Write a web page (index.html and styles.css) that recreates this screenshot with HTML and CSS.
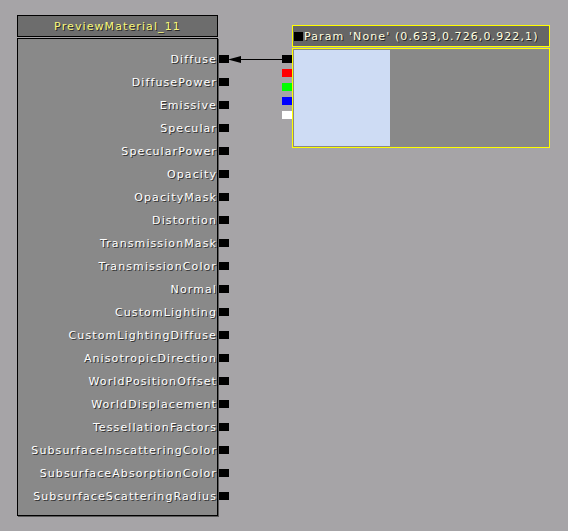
FILE: index.html
```html
<!DOCTYPE html>
<html>
<head>
<meta charset="utf-8">
<link rel="stylesheet" href="styles.css">
</head>
<body>
<div class="canvas">
  <div class="node material">
    <div class="mat-title">PreviewMaterial_11</div>
    <div class="mat-body">
      <div class="row"><span>Diffuse</span><i class="out"></i></div>
      <div class="row"><span>DiffusePower</span><i class="out"></i></div>
      <div class="row"><span>Emissive</span><i class="out"></i></div>
      <div class="row"><span>Specular</span><i class="out"></i></div>
      <div class="row"><span>SpecularPower</span><i class="out"></i></div>
      <div class="row"><span>Opacity</span><i class="out"></i></div>
      <div class="row"><span>OpacityMask</span><i class="out"></i></div>
      <div class="row"><span>Distortion</span><i class="out"></i></div>
      <div class="row"><span>TransmissionMask</span><i class="out"></i></div>
      <div class="row"><span>TransmissionColor</span><i class="out"></i></div>
      <div class="row"><span>Normal</span><i class="out"></i></div>
      <div class="row"><span>CustomLighting</span><i class="out"></i></div>
      <div class="row"><span>CustomLightingDiffuse</span><i class="out"></i></div>
      <div class="row"><span>AnisotropicDirection</span><i class="out"></i></div>
      <div class="row"><span>WorldPositionOffset</span><i class="out"></i></div>
      <div class="row"><span>WorldDisplacement</span><i class="out"></i></div>
      <div class="row"><span>TessellationFactors</span><i class="out"></i></div>
      <div class="row"><span>SubsurfaceInscatteringColor</span><i class="out"></i></div>
      <div class="row"><span>SubsurfaceAbsorptionColor</span><i class="out"></i></div>
      <div class="row"><span>SubsurfaceScatteringRadius</span><i class="out"></i></div>
    </div>
  </div>

  <svg class="wire" width="56" height="12" viewBox="0 0 56 12">
    <line x1="6" y1="4.5" x2="56" y2="4.5" stroke="#000" stroke-width="1"/>
    <polygon points="1,4.5 14,1 14,8" fill="#000"/>
  </svg>

  <div class="node param">
    <div class="param-title"><i class="title-pin"></i>Param 'None' (0.633,0.726,0.922,1)</div>
    <div class="param-main">
      <div class="pins">
        <i class="pin black"></i>
        <i class="pin red"></i>
        <i class="pin green"></i>
        <i class="pin blue"></i>
        <i class="pin white"></i>
      </div>
      <div class="param-body">
        <div class="swatch"></div>
      </div>
    </div>
  </div>
</div>
</body>
</html>
```

FILE: styles.css
```css
html, body {
  margin: 0;
  padding: 0;
  background: #a6a4a7;
}

.canvas {
  position: relative;
  width: 568px;
  height: 531px;
  overflow: hidden;
  font-family: "DejaVu Sans", Verdana, sans-serif;
  font-size: 11px;
  letter-spacing: 1.1px;
}

.node {
  position: absolute;
}

.material {
  left: 17px;
  top: 15px;
  width: 201px;
  display: flex;
  flex-direction: column;
  gap: 1px;
}

.mat-title {
  height: 20px;
  line-height: 21px;
  border: 1px solid #000;
  background: #6d6d6d;
  color: #f8f87c;
  text-align: center;
  text-shadow: 1px 1px 0 #2a2a2a;
  letter-spacing: 1.1px;
}

.mat-body {
  border: 1px solid #000;
  background: #898989;
  padding: 8px 0 8px 0;
  box-shadow: 1px 1px 0 #5a5a5a;
}

.row {
  height: 23px;
  display: flex;
  align-items: center;
  justify-content: flex-end;
  gap: 2px;
  color: #fff;
  text-shadow: 1px 1px 0 #333;
}

.row span {
  line-height: 13px;
  padding-top: 1px;
}

.out {
  display: block;
  width: 10px;
  height: 8px;
  background: #000;
  margin-right: -12px;
}

.wire {
  position: absolute;
  left: 227px;
  top: 55px;
}

.param {
  left: 282px;
  top: 25px;
  display: flex;
  flex-direction: column;
  gap: 1px;
}

.param-title {
  margin-left: 10px;
  width: 256px;
  height: 20px;
  border: 1px solid #ffff00;
  background: #666666;
  color: #ffffe0;
  display: flex;
  align-items: center;
  text-shadow: 1px 1px 0 #222;
  white-space: nowrap;
}

.title-pin {
  display: block;
  width: 9px;
  height: 9px;
  background: #000;
  margin: 0 1px 0 1px;
}

.param-main {
  display: flex;
}

.pins {
  width: 10px;
  display: flex;
  flex-direction: column;
  gap: 6px;
  padding-top: 7px;
}

.pin {
  display: block;
  width: 10px;
  height: 8px;
}

.pin.black { background: #000; }
.pin.red { background: #ff0000; }
.pin.green { background: #00ff00; }
.pin.blue { background: #0000ff; }
.pin.white { background: #ffffff; }

.param-body {
  width: 254px;
  height: 96px;
  border: 1px solid #ffff00;
  background: #898989;
  padding: 1px;
}

.swatch {
  width: 96px;
  height: 96px;
  background: #cedcf4;
}
```
